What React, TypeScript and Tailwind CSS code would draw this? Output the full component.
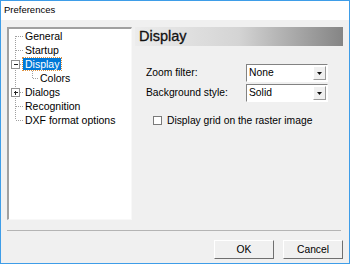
import React from "react";

const rows = [
  { label: "General", level: 0 },
  { label: "Startup", level: 0 },
  { label: "Display", level: 0, box: "minus", selected: true },
  { label: "Colors", level: 1 },
  { label: "Dialogs", level: 0, box: "plus" },
  { label: "Recognition", level: 0 },
  { label: "DXF format options", level: 0 },
];

const ROW = 14;

function TreeLines() {
  const c = (i: number) => i * ROW + 7;
  return (
    <svg className="absolute left-0 top-0" width="120" height="110">
      <g stroke="#a0a0a0" strokeWidth="1" strokeDasharray="1 1" shapeRendering="crispEdges">
        <line x1="6.5" y1={c(0)} x2="6.5" y2={c(6)} />
        {rows.map((r, i) =>
          r.level === 0 ? <line key={i} x1="7" y1={c(i) + 0.5} x2="14" y2={c(i) + 0.5} /> : null
        )}
        <line x1="23.5" y1={c(2) + 1} x2="23.5" y2={c(3)} />
        <line x1="24" y1={c(3) + 0.5} x2="30" y2={c(3) + 0.5} />
      </g>
      {rows.map((r, i) =>
        r.box ? (
          <g key={i} shapeRendering="crispEdges">
            <rect x="2.5" y={c(i) - 3.5} width="8" height="8" fill="white" stroke="#919191" />
            <line x1="4.5" y1={c(i) + 0.5} x2="9" y2={c(i) + 0.5} stroke="#222" />
            {r.box === "plus" && (
              <line x1="6.5" y1={c(i) - 1.5} x2="6.5" y2={c(i) + 3} stroke="#222" />
            )}
          </g>
        ) : null
      )}
    </svg>
  );
}

function Select({ value }: { value: string }) {
  return (
    <div className="flex h-[18px] w-[82px] border-t border-l border-t-[#828282] border-l-[#828282] border-b border-r border-b-white border-r-white bg-white">
      <div className="flex-1 pl-[2px] text-[10.3px] leading-[16px] text-black">{value}</div>
      <div className="m-[1px] flex w-[13px] items-center justify-center border-t border-l border-t-white border-l-white border-b border-r border-b-[#9a9a9a] border-r-[#9a9a9a] bg-[#f0f0f0]">
        <svg width="5" height="3" viewBox="0 0 5 3">
          <path d="M0 0 H5 L2.5 3 Z" fill="#111" />
        </svg>
      </div>
    </div>
  );
}

function Button({ label }: { label: string }) {
  return (
    <div className="flex h-[19px] w-[60px] items-center justify-center border-t border-l border-t-white border-l-white border-b border-r border-b-[#6f6f6f] border-r-[#6f6f6f] bg-[#f0f0f0] text-[10.3px] text-black">
      {label}
    </div>
  );
}

export default function App() {
  return (
    <div
      className="flex h-[264px] w-[350px] flex-col border border-[#3e9de8] bg-[#f0f0f0]"
      style={{ fontFamily: '"Liberation Sans", Arial, sans-serif' }}
    >
      <div className="flex h-[19px] items-center bg-white pl-[3px] text-[9.5px] text-black">
        Preferences
      </div>

      <div className="flex flex-1 flex-col px-[6px] pt-[7px]">
        <div className="flex gap-[3px]">
          <div className="h-[193px] w-[125px] border-t-2 border-l-2 border-t-[#a0a0a0] border-l-[#a0a0a0] border-b border-r border-b-[#f8f8f8] border-r-[#f8f8f8] bg-white">
            <div className="relative">
              <TreeLines />
              {rows.map((r) => (
                <div
                  key={r.label}
                  className={`flex h-[14px] items-center ${r.level === 0 ? "pl-[14px]" : "pl-[29px]"}`}
                >
                  <span
                    className={`relative px-[2px] text-[10.5px] leading-[12px] ${
                      r.selected
                        ? "bg-[#0078d7] text-white outline outline-1 outline-dotted outline-[#e0913f]"
                        : "text-black"
                    }`}
                  >
                    {r.label}
                  </span>
                </div>
              ))}
            </div>
          </div>

          <div className="flex flex-1 flex-col">
            <div className="flex h-[19px] items-center bg-gradient-to-r from-[#ececec] via-[#d4d4d4] to-[#858585] pl-[4px] text-[14.5px] text-[#111] [-webkit-text-stroke:0.3px_#111]">
              Display
            </div>
            <div className="mt-[18px] flex flex-col gap-[2px] pl-[11px]">
              <div className="flex items-center">
                <div className="w-[100px] text-[10.3px] text-black">Zoom filter:</div>
                <Select value="None" />
              </div>
              <div className="flex items-center">
                <div className="w-[100px] text-[10.3px] text-black">Background style:</div>
                <Select value="Solid" />
              </div>
              <div className="mt-[9px] flex items-center pl-[7px]">
                <div className="h-[9px] w-[9px] border border-[#7a7a7a] bg-white" />
                <div className="ml-[5px] text-[10.3px] text-black">Display grid on the raster image</div>
              </div>
            </div>
          </div>
        </div>

        <div className="mt-[10px] mr-[2px] border-t border-t-[#b4b4b4]" />

        <div className="mt-[9px] flex justify-end gap-[9px]">
          <Button label="OK" />
          <Button label="Cancel" />
        </div>
      </div>
    </div>
  );
}
